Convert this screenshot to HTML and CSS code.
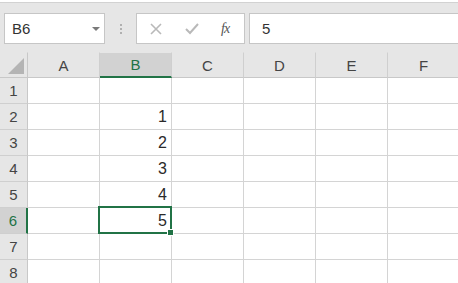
FILE: index.html
```html
<!DOCTYPE html>
<html>
<head>
<meta charset="utf-8">
<link rel="stylesheet" href="styles.css">
</head>
<body>
<div class="toolbar">
  <div class="namebox">
    <span class="name">B6</span>
    <span class="dd"></span>
  </div>
  <div class="grip"><i></i><i></i><i></i></div>
  <div class="fxbox">
    <svg class="ic" width="14" height="14" viewBox="0 0 14 14"><path d="M2 2 L12 12 M12 2 L2 12" stroke="#b9b9b9" stroke-width="1.6" fill="none"/></svg>
    <svg class="ic" width="16" height="14" viewBox="0 0 16 14"><path d="M2 7 L6 11 L14 2" stroke="#b9b9b9" stroke-width="2" fill="none"/></svg>
    <span class="fx">fx</span>
  </div>
  <div class="formula">5</div>
</div>
<div class="sheet">
  <div class="corner"><span class="tri"></span></div>
  <div class="ch">A</div><div class="ch sel">B</div><div class="ch">C</div><div class="ch">D</div><div class="ch">E</div><div class="ch">F</div>

  <div class="rh">1</div><div class="c"></div><div class="c"></div><div class="c"></div><div class="c"></div><div class="c"></div><div class="c"></div>
  <div class="rh">2</div><div class="c"></div><div class="c num">1</div><div class="c"></div><div class="c"></div><div class="c"></div><div class="c"></div>
  <div class="rh">3</div><div class="c"></div><div class="c num">2</div><div class="c"></div><div class="c"></div><div class="c"></div><div class="c"></div>
  <div class="rh">4</div><div class="c"></div><div class="c num">3</div><div class="c"></div><div class="c"></div><div class="c"></div><div class="c"></div>
  <div class="rh">5</div><div class="c"></div><div class="c num">4</div><div class="c"></div><div class="c"></div><div class="c"></div><div class="c"></div>
  <div class="rh sel">6</div><div class="c"></div><div class="c num active">5</div><div class="c"></div><div class="c"></div><div class="c"></div><div class="c"></div>
  <div class="rh">7</div><div class="c"></div><div class="c"></div><div class="c"></div><div class="c"></div><div class="c"></div><div class="c"></div>
  <div class="rh">8</div><div class="c"></div><div class="c"></div><div class="c"></div><div class="c"></div><div class="c"></div><div class="c"></div>
</div>
</body>
</html>
```
FILE: styles.css
```css
html, body {
  margin: 0;
  padding: 0;
  background: #ffffff;
  overflow: hidden;
  font-family: "Liberation Sans", "Noto Sans CJK JP", sans-serif;
}
.toolbar {
  height: 50px;
  background: #e6e6e6;
  border-top: 1px solid #d2d2d2;
  margin-top: 2px;
  display: flex;
  align-items: flex-start;
  padding-top: 10px;
  box-sizing: border-box;
  white-space: nowrap;
}
.namebox {
  margin-left: 4px;
  width: 101px;
  height: 31px;
  box-sizing: border-box;
  border: 1px solid #c6c6c6;
  background: #fff;
  display: flex;
  align-items: center;
  justify-content: space-between;
  padding: 0 3px 0 7px;
}
.name {
  font-size: 15px;
  color: #333;
}
.dd {
  width: 0;
  height: 0;
  border-left: 4px solid transparent;
  border-right: 4px solid transparent;
  border-top: 4px solid #7a7a7a;
  margin-right: 1px;
}
.grip {
  width: 31px;
  height: 31px;
  display: flex;
  flex-direction: column;
  align-items: center;
  justify-content: center;
  gap: 2px;
}
.grip i {
  display: block;
  width: 2px;
  height: 2px;
  background: #b0b0b0;
}
.fxbox {
  width: 109px;
  height: 31px;
  box-sizing: border-box;
  border: 1px solid #c6c6c6;
  background: #fff;
  display: flex;
  align-items: center;
  padding-left: 12px;
}
.ic { display: block; }
.ic + .ic { margin-left: 21px; }
.fx {
  margin-left: 21px;
  font-family: "Liberation Serif", serif;
  font-style: italic;
  font-size: 14px;
  color: #555;
  letter-spacing: -1px;
}
.formula {
  margin-left: 4px;
  flex: 1;
  height: 31px;
  box-sizing: border-box;
  border: 1px solid #c6c6c6;
  border-right: none;
  background: #fff;
  font-size: 15px;
  color: #333;
  padding-left: 12px;
  line-height: 29px;
}
.sheet {
  display: grid;
  grid-template-columns: 28px repeat(6, 72px);
  grid-template-rows: 26px repeat(8, 26px);
  background: #e6e6e6;
}
.corner, .ch, .rh, .c {
  box-sizing: border-box;
}
.corner {
  background: #e6e6e6;
  border-right: 1px solid #c8c8c8;
  border-bottom: 1px solid #c8c8c8;
  position: relative;
  border-top: 1px solid #e6e6e6;
}
.tri {
  position: absolute;
  right: 3px;
  bottom: 3px;
  width: 0;
  height: 0;
  border-left: 16px solid transparent;
  border-bottom: 16px solid #b4b4b4;
}
.ch {
  background: #e6e6e6;
  border-top: 1px solid #e6e6e6;
  border-right: 1px solid #cfcfcf;
  border-bottom: 1px solid #c8c8c8;
  display: flex;
  align-items: center;
  justify-content: center;
  font-size: 15px;
  color: #444;
}
.ch.sel {
  background: #d2d2d2;
  border-bottom: 2px solid #217346;
  color: #217346;
}
.rh {
  background: #e6e6e6;
  border-right: 1px solid #c8c8c8;
  border-bottom: 1px solid #cfcfcf;
  display: flex;
  align-items: center;
  justify-content: center;
  font-size: 15px;
  color: #444;
}
.rh.sel {
  background: #d2d2d2;
  border-right: 2px solid #217346;
  color: #217346;
}
.c {
  background: #fff;
  border-right: 1px solid #d4d4d4;
  border-bottom: 1px solid #d4d4d4;
  font-size: 16px;
  color: #2a2a2a;
  display: flex;
  align-items: center;
  justify-content: flex-end;
  padding-right: 4px;
}
.active {
  position: relative;
}
.active::after {
  content: "";
  position: absolute;
  left: -2px;
  top: -2px;
  right: -1px;
  bottom: -1px;
  border: 2px solid #217346;
}
.active::before {
  content: "";
  position: absolute;
  right: -3px;
  bottom: -3px;
  width: 5px;
  height: 5px;
  background: #217346;
  border: 1px solid #fff;
  z-index: 2;
}
```
